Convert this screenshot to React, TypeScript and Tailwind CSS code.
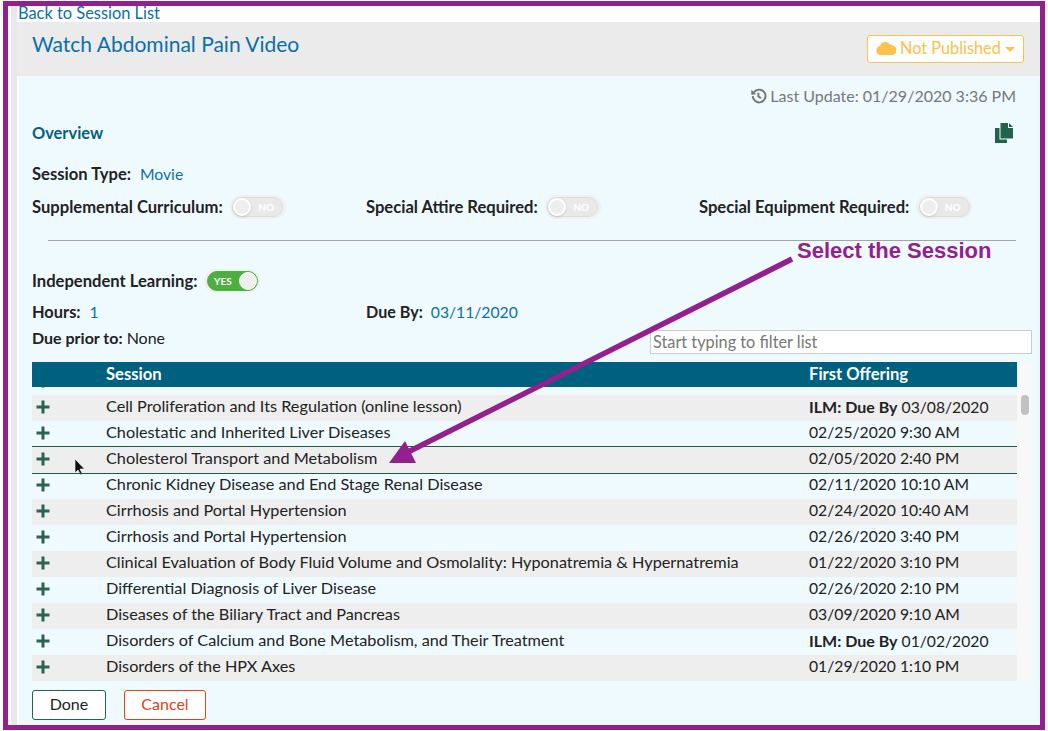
import React from "react";

const due = (d: string) => <><b className="font-bold text-[16px]">ILM: Due By</b> {d}</>;

const rows: [string, React.ReactNode, boolean?][] = [
  ["Cell Proliferation and Its Regulation (online lesson)", due("03/08/2020")],
  ["Cholestatic and Inherited Liver Diseases", "02/25/2020 9:30 AM"],
  ["Cholesterol Transport and Metabolism", "02/05/2020 2:40 PM", true],
  ["Chronic Kidney Disease and End Stage Renal Disease", "02/11/2020 10:10 AM"],
  ["Cirrhosis and Portal Hypertension", "02/24/2020 10:40 AM"],
  ["Cirrhosis and Portal Hypertension", "02/26/2020 3:40 PM"],
  ["Clinical Evaluation of Body Fluid Volume and Osmolality: Hyponatremia & Hypernatremia", "01/22/2020 3:10 PM"],
  ["Differential Diagnosis of Liver Disease", "02/26/2020 2:10 PM"],
  ["Diseases of the Biliary Tract and Pancreas", "03/09/2020 9:10 AM"],
  ["Disorders of Calcium and Bone Metabolism, and Their Treatment", due("01/02/2020")],
  ["Disorders of the HPX Axes", "01/29/2020 1:10 PM"],
];

function Plus() {
  return (
    <svg width="14" height="14" viewBox="0 0 14 14" className="block">
      <path d="M5.500 0.500h3v5h5v3h-5v5h-3v-5h-5v-3h5z" fill="#2a6350" />
    </svg>
  );
}

function Toggle({ on }: { on?: boolean }) {
  return (
    <span className="inline-flex w-[56px] h-[24px] rounded-full bg-[#f0f0f0] items-center justify-center ml-[7px]">
      {on ? (
        <span className="w-[51px] h-[20px] rounded-full bg-[#4caf3f] border border-[#4caf3f] flex items-center justify-between pl-[6px]">
          <span className="text-[10px] font-bold text-white leading-none">YES</span>
          <span className="w-[18px] h-[18px] rounded-full bg-[#eeeeee] border border-white" />
        </span>
      ) : (
        <span className="w-[51px] h-[20px] rounded-full bg-[#e9e9e9] border border-[#dddddd] flex items-center">
          <span className="w-[18px] h-[18px] rounded-full bg-[#eeeeee] border-2 border-white shadow" />
          <span className="text-[10px] font-bold text-white leading-none ml-[7px]">NO</span>
        </span>
      )}
    </span>
  );
}

export default function App() {
  return (
    <div className="relative w-[1048px] h-[731px] bg-white overflow-hidden text-[15.700px] text-[#222222] font-['Lato','Noto_Sans',sans-serif]">
      <div className="absolute left-[3px] top-[1px] w-[1042px] h-[729px] border-[5px] border-[#92208f] bg-white flex">
        <div className="w-[3px] bg-white" />
        <div className="w-[6px] bg-[#e9e9e9]" />
        <div className="flex-1 flex flex-col min-w-0">
          <div className="h-[16px] bg-white pl-[1px] text-[16.400px] leading-[14px] text-[#0b6fa8] whitespace-nowrap">Back to Session List</div>
          <div className="h-[54px] bg-[#ebebeb] flex items-start justify-between pl-[15px] pr-[16px]">
            <div className="text-[21px] leading-[26px] pt-[9px] text-[#0b6fa8]">Watch Abdominal Pain Video</div>
            <div className="mt-[13px] w-[157px] h-[28px] bg-white border border-[#fdc04a] rounded-[3px] flex items-center pl-[8px] pb-[2px] gap-[4px] text-[#fdc04a] text-[16.300px]">
              <svg width="20" height="14" viewBox="0 0 20 14"><path d="M5 14a4.500 4.500 0 0 1-1-8.900A5.500 5.500 0 0 1 14 3.500a3.600 3.600 0 0 1 2 .8A4.800 4.800 0 0 1 15.500 14z" fill="#fdc04a" /></svg>
              <span>Not Published</span>
              <span className="w-0 h-0 mt-[2px] border-x-[5px] border-x-transparent border-t-[5px] border-t-[#fdc04a]" />
            </div>
          </div>
          <div className="flex-1 bg-[#effaff] ml-[2px] flex flex-col pl-[13px] min-h-0">
            <div className="h-[38px] flex items-center justify-end pr-[24px] pt-[2px] text-[#777777] text-[16px] gap-[3px] shrink-0">
              <svg width="18" height="18" viewBox="0 0 24 24" fill="none" stroke="#777777" strokeWidth="2.600"><path d="M5 12a8.500 8.500 0 1 0 2.500-6L4 9.500" /><path d="M3 3.500v6.500h6.500" fill="#777777" stroke="none" /><path d="M12.500 7.500v5l3.500 2.500" /></svg>
              <span>Last Update: 01/29/2020 3:36 PM</span>
            </div>
            <div className="h-[38px] flex items-center justify-between pr-[27px] shrink-0">
              <span className="font-bold text-[16.400px] text-[#075e7c]">Overview</span>
              <svg width="18" height="20" viewBox="0 0 18 20"><path d="M0 5h4.500v11.500H12V20H0z" fill="#22634c" /><path d="M5.500 0H13v5h5v10.500H5.500z" fill="#22634c" /><path d="M14 0l4 4h-4z" fill="#22634c" /></svg>
            </div>
            <div className="h-[29px] mt-[8px] flex items-center shrink-0"><b className="font-bold text-[16.600px] mr-[9px]">Session Type:</b><span className="text-[#0b6fa8]">Movie</span></div>
            <div className="h-[36px] flex items-center text-[16.600px] shrink-0">
              <div className="w-[334px] flex items-center"><b className="font-bold">Supplemental Curriculum:</b><Toggle /></div>
              <div className="w-[333px] flex items-center"><b className="font-bold">Special Attire Required:</b><Toggle /></div>
              <div className="flex items-center"><b className="font-bold">Special Equipment Required:</b><Toggle /></div>
            </div>
            <div className="h-[1px] bg-[#a5a5a5] ml-[16px] mr-[24px] mt-[15px] mb-[26px] shrink-0" />
            <div className="h-[28px] flex items-center shrink-0"><b className="font-bold text-[16.600px]">Independent Learning:</b><Toggle on /></div>
            <div className="h-[30px] flex items-center mt-[2px] shrink-0">
              <div className="w-[334px]"><b className="font-bold text-[16.400px] mr-[9px]">Hours:</b><span className="text-[#0b6fa8]">1</span></div>
              <div><b className="font-bold text-[16.100px] mr-[8px]">Due By:</b><span className="text-[#0b6fa8]">03/11/2020</span></div>
            </div>
            <div className="h-[24px] flex items-start relative shrink-0">
              <div className="leading-[21px] text-[16px]"><b className="font-bold">Due prior to:</b> None</div>
              <input readOnly placeholder="Start typing to filter list" className="absolute left-[618px] top-[3px] w-[382px] h-[24px] bg-white border border-[#cccccc] px-[2px] text-[16.300px] placeholder:text-[#777777] outline-none" />
            </div>
            <div className="mt-[11px] flex w-[1000px] shrink-0">
              <div className="w-[985px] flex flex-col">
                <div className="h-[25px] bg-[#00607f] text-white text-[16.600px] font-bold flex items-center shrink-0">
                  <span className="w-[73px] shrink-0" /><span className="w-[704px] shrink-0 pl-[1px]">Session</span><span>First Offering</span>
                </div>
                <div className="h-[8px] overflow-hidden relative"><div className="absolute left-[4px] top-[-13px]"><Plus /></div></div>
                {rows.map(([title, when, selected], i) => (
                  <div key={i} className={`h-[26px] flex items-center shrink-0 relative ${i % 2 === 0 ? "bg-[#eeeeee]" : "bg-[#effaff]"}`}>
                    {selected && <span className="absolute left-0 right-0 top-[-1px] h-px bg-[#1c5c48]" />}
                    {selected && <span className="absolute left-0 right-0 bottom-[-1px] h-px bg-[#1c5c48] z-10" />}
                    <span className="w-[74px] shrink-0 pl-[4px] pb-[2px]"><Plus /></span>
                    <span className="w-[703px] shrink-0 whitespace-nowrap text-[16.250px] pb-[4px]">{title}</span>
                    <span className="whitespace-nowrap pb-[2px]">{when}</span>
                  </div>
                ))}
              </div>
              <div className="w-[15px] bg-[#f8f8f8] relative">
                <div className="absolute left-[4px] top-[33px] w-[8px] h-[20px] rounded-full bg-[#c1c1c1]" />
              </div>
            </div>
            <div className="flex gap-[18px] mt-[9px]">
              <button className="w-[74px] h-[30px] bg-white border border-[#22634c] rounded-[3px] pb-[2px] text-[#222222] text-[16px]">Done</button>
              <button className="w-[82px] h-[30px] bg-white border border-[#e2401c] rounded-[3px] pb-[2px] text-[#e2401c] text-[16px]">Cancel</button>
            </div>
          </div>
        </div>
      </div>
      <div className="absolute left-[797px] top-[238px] text-[22px] leading-[26px] font-bold text-[#92208f] font-['Liberation_Sans',sans-serif] whitespace-nowrap">Select the Session</div>
      <svg className="absolute left-0 top-0 pointer-events-none" width="1048" height="731">
        <line x1="792" y1="259" x2="408" y2="452" stroke="#92208f" strokeWidth="5.500" />
        <path d="M389 463l16-22 11 22z" fill="#92208f" />
        <path d="M75 459v14l3-3 2.500 5 2-1-2.500-5h4.500z" fill="#111111" stroke="#ffffff" strokeWidth="0.600" />
      </svg>
    </div>
  );
}
